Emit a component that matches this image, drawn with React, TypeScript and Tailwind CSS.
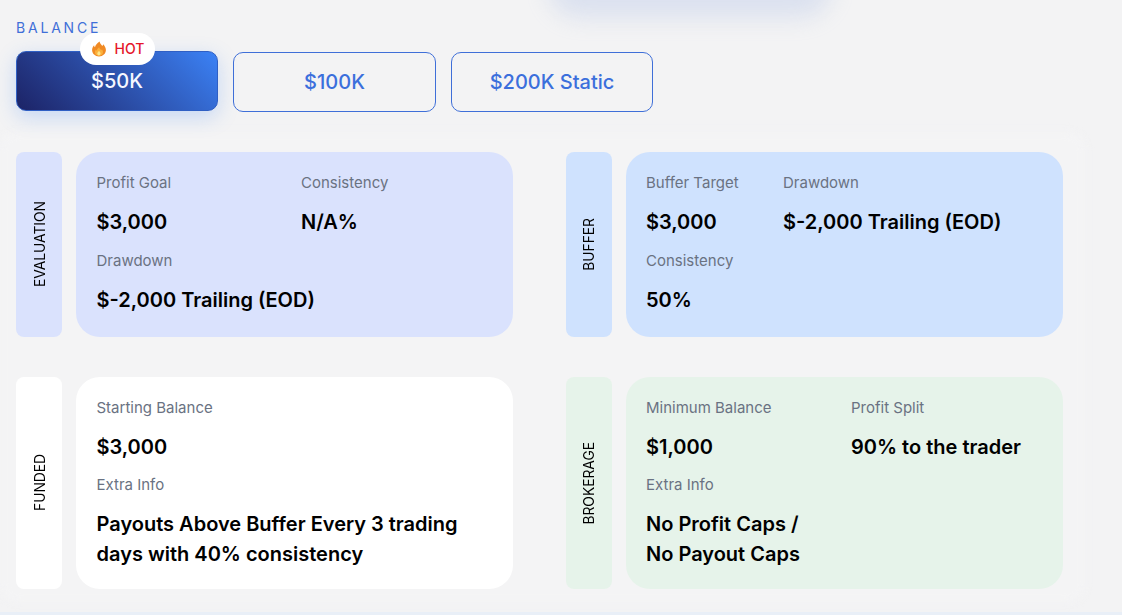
import React from "react";

interface Field {
  label: string;
  value: React.ReactNode;
  wide?: boolean;
}

interface PlanCardProps {
  title: string;
  tabClass: string;
  cardClass: string;
  gridClass: string;
  fields: Field[];
}

const Flame = () => (
  <svg width="16" height="16" viewBox="0 0 16 16" className="shrink-0">
    <path
      d="M8.600 0.500c.4 2.100 1.700 3.200 2.700 4.500.5-.5.800-1.100.8-1.800 1.700 1.700 2.800 3.700 2.800 5.900 0 3.700-3 6.400-6.900 6.400S1.100 12.800 1.100 9.100c0-1.900.8-3.600 2-4.900 0 .9.300 1.500.9 2C4.200 4 6.300 2.300 8.600.5z"
      fill="#f08a24"
    />
    <path
      d="M8.200 6.200c.2 1.400 1.300 2 2.100 3 .3-.2.500-.6.600-1 .7.900 1.100 1.900 1.100 3 0 2.200-1.800 3.600-4 3.600s-4-1.400-4-3.600c0-1 .4-1.900 1-2.600.1.500.3.900.7 1.100C6 8.200 6.900 7 8.200 6.200z"
      fill="#fbb13c"
    />
    <path
      d="M8 9.800c.3.900 1.500 1.300 1.500 2.700 0 1.100-.7 1.900-1.600 1.900s-1.600-.8-1.600-1.800c0-1.200 1.200-1.700 1.700-2.800z"
      fill="#fde68a"
    />
  </svg>
);

const PlanCard: React.FC<PlanCardProps> = ({ title, tabClass, cardClass, gridClass, fields }) => {
  return (
    <div className="flex min-h-[185px] gap-[14px] items-stretch">
      <div className={`w-[46px] shrink-0 rounded-lg pl-[2px] flex items-center justify-center ${tabClass}`}>
        <span className="[writing-mode:vertical-rl] rotate-180 text-[13.8px] text-black">{title}</span>
      </div>
      <div className={`flex flex-1 flex-col rounded-3xl pl-[20.5px] pr-5 pt-[21px] pb-5 ${cardClass}`}>
        <div className={`grid flex-1 ${gridClass}`}>
          {fields.map((f) => (
            <div key={f.label} className={`flex flex-col gap-[14px] ${f.wide ? "col-span-2" : ""}`}>
              <span className="text-[15px] leading-5 text-gray-500">{f.label}</span>
              <span className="text-xl leading-[30px] font-semibold text-black">{f.value}</span>
            </div>
          ))}
        </div>
      </div>
    </div>
  );
};

export default function App() {
  return (
    <div className="relative h-[615px] w-[1122px] overflow-hidden bg-[#f3f3f4] font-['Inter',sans-serif]">
      <div className="absolute left-[560px] -top-[40px] h-[40px] w-[260px] rounded-full shadow-[0_6px_22px_12px_rgba(170,190,230,0.32)]" />
      <div className="absolute left-0 top-[132px] h-[470px] w-[1085px] rounded-2xl bg-[#f4f4f5] blur-xs" />
      <div className="absolute inset-x-0 bottom-0 h-[3px] bg-[#e9eff7]" />

      <div className="relative pl-4 pt-[20px]">
        <div className="text-sm leading-4 tracking-[0.2em] text-[#3f6fd8]">BALANCE</div>

        <div className="mt-4 flex gap-[15px]">
          <button className="relative h-[60px] w-[202px] -translate-y-px rounded-[10px] border border-[#2f5fc4] bg-linear-45 from-[#1c2366] to-[#3b82f6] text-xl font-medium text-[#f5f7ff] shadow-[0_6px_20px_rgba(59,130,246,0.25)]">
            $50K
            <span className="absolute -top-[19px] left-[63px] flex h-[32px] w-[75px] items-center justify-center gap-[8px] rounded-full bg-white text-sm font-medium text-[#e5162a]">
              <Flame />
              HOT
            </span>
          </button>
          <button className="h-[60px] w-[203px] rounded-[10px] border border-[#3f6fd8] text-xl font-medium text-[#3b6fdc]">
            $100K
          </button>
          <button className="h-[60px] w-[202px] rounded-[10px] border border-[#3f6fd8] text-xl font-medium text-[#3b6fdc]">
            $200K Static
          </button>
        </div>

        <div className="mt-[40px] grid w-[1047px] grid-cols-[497px_497.5px] gap-x-[52.5px] gap-y-[40px]">
          <PlanCard
            title="EVALUATION"
            tabClass="bg-[#dae2fd]"
            cardClass="bg-[#dae2fd]"
            gridClass="grid-cols-[204.5px_1fr] gap-y-3"
            fields={[
              { label: "Profit Goal", value: "$3,000" },
              { label: "Consistency", value: "N/A%" },
              { label: "Drawdown", value: "$-2,000 Trailing (EOD)", wide: true },
            ]}
          />
          <PlanCard
            title="BUFFER"
            tabClass="bg-[#cfe2fe]"
            cardClass="bg-[#cfe2fe]"
            gridClass="grid-cols-[137px_1fr] gap-y-3"
            fields={[
              { label: "Buffer Target", value: "$3,000" },
              { label: "Drawdown", value: "$-2,000 Trailing (EOD)" },
              { label: "Consistency", value: "50%" },
            ]}
          />
          <PlanCard
            title="FUNDED"
            tabClass="bg-white"
            cardClass="bg-white"
            gridClass="grid-cols-[204.5px_1fr] gap-y-[13px]"
            fields={[
              { label: "Starting Balance", value: "$3,000", wide: true },
              {
                label: "Extra Info",
                value: "Payouts Above Buffer Every 3 trading days with 40% consistency",
                wide: true,
              },
            ]}
          />
          <PlanCard
            title="BROKERAGE"
            tabClass="bg-[#e6f3ea]"
            cardClass="bg-[#e6f3ea]"
            gridClass="grid-cols-[205px_1fr] gap-y-[13px]"
            fields={[
              { label: "Minimum Balance", value: "$1,000" },
              { label: "Profit Split", value: "90% to the trader" },
              {
                label: "Extra Info",
                value: (
                  <>
                    No Profit Caps /<br />
                    No Payout Caps
                  </>
                ),
                wide: true,
              },
            ]}
          />
        </div>
      </div>
    </div>
  );
}
